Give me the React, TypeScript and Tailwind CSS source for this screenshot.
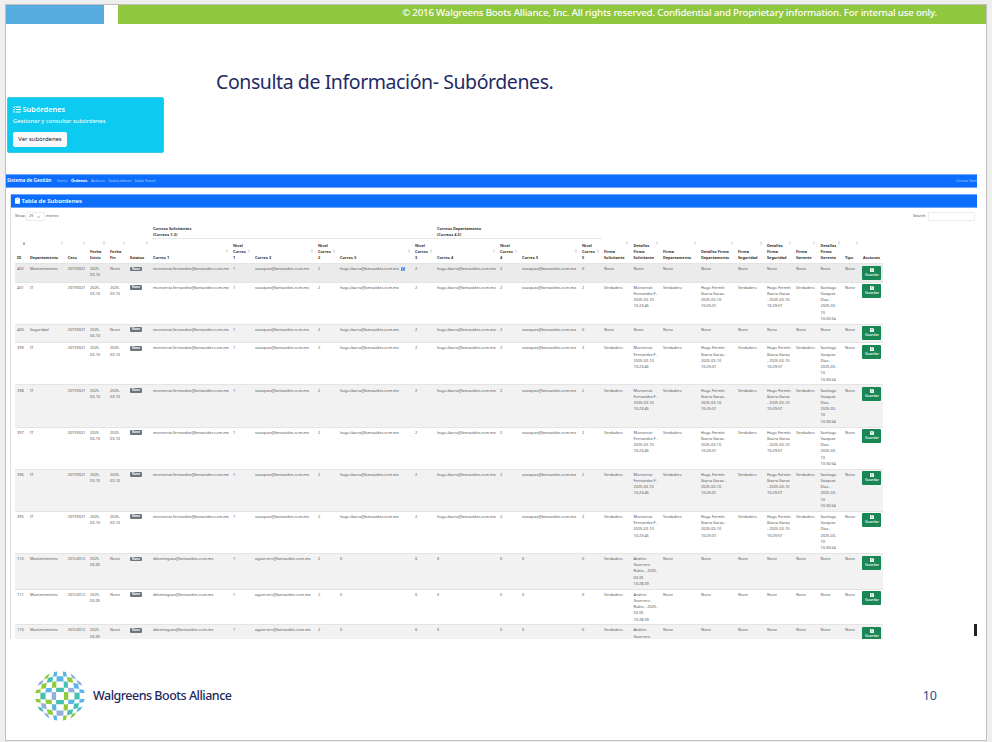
import React from "react";

const MAIL_M = "monserrat.fernandez@benavides.com.mx";
const MAIL_V = "svasquez@benavides.com.mx";
const MAIL_H = "hugo.ibarra@benavides.com.mx";
const MAIL_D = "ddominguez@benavides.com.mx";
const MAIL_A = "aguerrero@benavides.com.mx";

const GRID =
  "grid grid-cols-[13px_37.7px_22.3px_20px_20px_23px_80px_22px_63px_22px_75px_22px_63px_22px_60px_22px_29.5px_29.5px_38px_37px_29px_29px_24.5px_24.5px_18px_22px]";

const HEADERS = [
  "ID", "Departamento", "Ceco", "Fecha\nInicio", "Fecha\nFin", "Estatus",
  "Correo 1", "Nivel\nCorreo\n1", "Correo 2", "Nivel\nCorreo\n2", "Correo 3", "Nivel\nCorreo\n3",
  "Correo 4", "Nivel\nCorreo\n4", "Correo 5", "Nivel\nCorreo\n5",
  "Firma\nSolicitante", "Detalles\nFirma\nSolicitante", "Firma\nDepartamento", "Detalles Firma\nDepartamento",
  "Firma\nSeguridad", "Detalles\nFirma\nSeguridad", "Firma\nGerente", "Detalles\nFirma\nGerente", "Tipo", "Acciones",
];

type Row = { cells: string[]; height: string; edit?: boolean; bg: string };

const N = "None";
const V = "Verdadero";

function unsigned(id: string, dept: string, height: string, bg: string, edit = false): Row {
  return {
    cells: [id, dept, "201Y0021", "2025-\n03-10", N, N, MAIL_M, "1", MAIL_V, "2", MAIL_H, "2", MAIL_H, "2", MAIL_V, "0", N, N, N, N, N, N, N, N, N],
    height, edit, bg,
  };
}

function signed(id: string, bg: string, height = "h-[42.1px]"): Row {
  return {
    cells: [
      id, "IT", "201Y0021", "2025-\n03-10", "2025-\n03-10", N, MAIL_M, "1", MAIL_V, "2", MAIL_H, "2", MAIL_H, "2", MAIL_V, "2",
      V, "Monserrat\nFernandez F -\n2025-03-10\n10:23:45", V, "Hugo Fermín\nIbarra Garza -\n2025-03-10\n10:25:01",
      V, "Hugo Fermín\nIbarra Garza\n- 2025-03-10\n10:29:57", V, "Santiago\nVazquez\nDiaz -\n2025-03-\n10\n10:30:54", N,
    ],
    height, bg,
  };
}

function maintenance(id: string, bg: string): Row {
  return {
    cells: [
      id, "Mantenimiento", "201L0012", "2025-\n03-05", N, N, MAIL_D, "1", MAIL_A, "2", "0", "0", "0", "0", "0", "0",
      V, "Andres\nGuerrero\nRubio - 2025-\n03-05\n10:28:39", N, N, N, N, N, N, N,
    ],
    height: "h-[35.7px]", bg,
  };
}

const STRIPE = "bg-[#f2f2f2]";
const PLAIN = "bg-white";

const ROWS: Row[] = [
  unsigned("402", "Mantenimiento", "h-[18.7px]", "bg-[#ebebeb]", true),
  signed("401", PLAIN, "h-[42px]"),
  unsigned("400", "Seguridad", "h-[18.7px]", STRIPE),
  signed("399", PLAIN),
  signed("398", STRIPE),
  signed("397", PLAIN),
  signed("396", STRIPE),
  signed("395", PLAIN),
  maintenance("113", STRIPE),
  maintenance("111", PLAIN),
  maintenance("110", STRIPE),
];

function SortMark({ index }: { index: number }) {
  const nested = index >= 6 && index <= 15;
  return (
    <svg
      viewBox="0 0 4 8"
      className={`absolute right-[3px] h-[4px] w-[2px] ${nested ? "top-[10px]" : "top-[1.5px]"}`}
    >
      <path d="M2 0 4 3.5H0Z" fill={index === 0 ? "#dddddd" : "#cfcfcf"} />
      <path d="M2 8 4 4.5H0Z" fill={index === 0 ? "#333333" : "#cfcfcf"} />
    </svg>
  );
}

function ListIcon() {
  return (
    <svg viewBox="0 0 16 14" className="h-[7px] w-[8px]" fill="none" stroke="white" strokeWidth="2.4">
      <path d="M6 2H16M6 7H16M5 12H16" />
      <path d="M0 2 1.8 3.6 4.6 .4M0 7 1.8 8.6 4.6 5.4" strokeWidth="2" />
      <circle cx="1.6" cy="12" r="1.4" fill="white" stroke="none" />
    </svg>
  );
}

function ClipboardIcon() {
  return (
    <svg viewBox="0 0 12 16" className="h-[7px] w-[5px]">
      <path d="M1.5 2H3.5a2.5 2 0 0 1 5 0H10.5A1.5 1.5 0 0 1 12 3.5V14.5A1.5 1.5 0 0 1 10.5 16H1.5A1.5 1.5 0 0 1 0 14.5V3.5A1.5 1.5 0 0 1 1.5 2Z" fill="white" />
      <path d="M3.5 4.5H8.5" stroke="#0d6efd" strokeWidth="1" />
    </svg>
  );
}

function EditIcon() {
  return (
    <svg viewBox="0 0 16 16" className="h-[4.5px] w-[4.5px]" fill="none" stroke="#0d6efd" strokeWidth="2.8">
      <path d="M8 2.5H2V14H13.5V9" />
      <path d="M6 10 14.5 1.5" strokeWidth="4.4" />
    </svg>
  );
}

function SaveIcon() {
  return (
    <svg viewBox="0 0 14 14" className="h-[4px] w-[4px]">
      <path d="M1.5 0H10.5L14 3.5V12.5A1.5 1.5 0 0 1 12.5 14H1.5A1.5 1.5 0 0 1 0 12.5V1.5A1.5 1.5 0 0 1 1.5 0Z" fill="white" />
      <path d="M3 2.5H9V5H3Z" fill="#198754" />
      <circle cx="7" cy="9.5" r="1.8" fill="#198754" />
    </svg>
  );
}

function Cell({ row, index, text }: { row: Row; index: number; text: string }) {
  if (index === 5) {
    return (
      <div className="pl-[2px] pt-[0.6px]">
        <div className="h-[4.8px] w-[12px] rounded-[1.2px] bg-[#6c757d] text-center text-[3px] font-bold leading-[4.6px] text-white">
          {text}
        </div>
      </div>
    );
  }
  return (
    <div className="flex gap-[2px] whitespace-pre pl-[2px]">
      <span>{text}</span>
      {row.edit && index === 10 && <span className="pt-[0.8px]"><EditIcon /></span>}
    </div>
  );
}

const B = "#5ab4e5";
const G = "#90cb3e";
const T = "#45c1b0";
const L = "#94afdd";
const GLOBE: [number, string[]][] = [
  [-4, [G, B, B, L]],
  [-3, [L, T, B, G, L]],
  [-2, [G, G, T, B]],
  [-1, [G, B, T, L, B]],
  [0, [T, L, G, T]],
  [1, [G, G, T, B, B]],
  [2, [L, B, G, T]],
  [3, [T, G, L, T, B]],
  [4, [L, B, G, G]],
];
const EDGES = [-1, -0.8, -0.59, -0.34, -0.16, 0.16, 0.34, 0.59, 0.8, 1];

/* Maps the unit square onto the unit disc so the checkerboard bulges like a sphere. */
function bulge(u: number, v: number) {
  const x = u * Math.sqrt(1 - (v * v) / 2) * 24.7 + 25;
  const y = v * Math.sqrt(1 - (u * u) / 2) * 24.7 + 25;
  return `${x.toFixed(2)},${y.toFixed(2)}`;
}

function Globe() {
  return (
    <svg viewBox="0 0 50 50" className="h-[50px] w-[50px]">
      {GLOBE.flatMap(([row, colors]) =>
        colors.map((color, k) => {
          const col = (colors.length === 5 ? -4 : -3) + k * 2;
          const [l, r, t, b] = [EDGES[col + 4], EDGES[col + 5], EDGES[row + 4], EDGES[row + 5]];
          return (
            <polygon
              key={`${row}:${col}`}
              points={[bulge(l, t), bulge(r, t), bulge(r, b), bulge(l, b)].join(" ")}
              fill={color}
            />
          );
        })
      )}
    </svg>
  );
}

export default function App() {
  return (
    <div className="h-[742px] w-[992px] overflow-hidden bg-[#efefef] pl-[5px] pt-[4px] font-['Noto_Sans',sans-serif]">
      <div className="relative flex h-[737px] w-[982px] flex-col border border-[#bfbfbf] bg-white">
        <header className="flex h-[19px] shrink-0 gap-[14px]">
          <div className="w-[98px] bg-[#57ade0]" />
          <div className="flex-1 whitespace-nowrap bg-[#8fc73f] pr-[49px] text-right text-[9.7px] font-medium leading-[16px] tracking-[-0.185px] text-white">
            © 2016 Walgreens Boots Alliance, Inc. All rights reserved. Confidential and Proprietary information. For internal use only.
          </div>
        </header>

        <h1 className="h-[73px] shrink-0 whitespace-nowrap pl-[210px] pt-[44px] text-[19.5px] leading-[28px] tracking-[-0.42px] text-[#242b63]">
          Consulta de Información- Subórdenes.
        </h1>

        <section className="ml-[1px] h-[56px] w-[157px] shrink-0 rounded-[2px] border border-[#3cc9e8] bg-[#0dcaf0] pl-[5px] pt-[6px] text-white">
          <div className="flex h-[10px] items-center gap-[1.5px] text-[7.4px] font-semibold leading-[10px]">
            <ListIcon />
            <span>Subórdenes</span>
          </div>
          <p className="pt-[3px] text-[5.85px] leading-[9px]">Gestionar y consultar subórdenes</p>
          <button className="mt-[6px] block h-[15px] w-[54px] whitespace-nowrap rounded-[2px] bg-[#f8f9fa] text-[5.9px] leading-[15px] text-[#222222]">
            Ver subórdenes
          </button>
        </section>

        <nav className="mt-[21px] flex h-[13.5px] w-[971px] shrink-0 items-center overflow-hidden whitespace-nowrap border-y border-[#6ea8fe] bg-[#0d6efd] text-[4.1px] text-[#a9cbfe]">
          <span className="w-[51px] pl-[1px] text-[4.75px] font-semibold text-white">Sistema de Gestión</span>
          <span className="w-[14px]">Inicio</span>
          <span className="w-[20px] text-[3.9px] font-bold text-white">Órdenes</span>
          <span className="w-[17.5px]">Activos</span>
          <span className="w-[26px]">Subórdenes</span>
          <span>Subir Excel</span>
          <span className="ml-auto w-[21px] overflow-hidden">Cerrar Sesión</span>
        </nav>

        <main className="ml-[4px] mt-[6px] h-[445px] w-[967px] shrink-0 overflow-hidden border-l border-[#dddddd] text-[3.87px] leading-[6.22px] text-[#555555]">
          <div className="flex h-[14.5px] items-center gap-[1.5px] border-y border-[#6ea8fe] bg-[#0d6efd] pl-[4px] text-[6px] font-semibold text-white">
            <ClipboardIcon />
            <span>Tabla de Subordenes</span>
          </div>

          <div className="flex h-[17px] items-center pl-[4px] pr-[2px]">
            <span className="w-[11px]">Show</span>
            <span className="flex h-[9px] w-[18.5px] items-center justify-between rounded-[1px] border border-[#ececec] pl-[2px] pr-[4px]">
              25
              <svg viewBox="0 0 8 5" className="h-[2px] w-[3px]" fill="none" stroke="#444444" strokeWidth="1.5"><path d="M1 1 4 4 7 1" /></svg>
            </span>
            <span className="pl-[1.5px]">entries</span>
            <span className="ml-auto w-[15px]">Search:</span>
            <span className="h-[9px] w-[47px] rounded-[1px] border border-[#ececec]" />
          </div>

          <div className="ml-[4px] w-[868px]">
            <div className="grid h-[14px] grid-cols-[136px_284px_167px] whitespace-pre font-bold text-[#333333]">
              <div />
              <div className="border-b border-[#e9e9e9] pl-[2px] pt-[0.6px]">{"Correos Solicitantes\n(Correos 1-3)"}</div>
              <div className="border-b border-[#e9e9e9] pl-[2px] pt-[0.6px]">{"Correos Departamento\n(Correos 4-5)"}</div>
            </div>

            <div className={`${GRID} h-[24px] font-bold text-[#333333]`}>
              {HEADERS.map((label, i) => (
                <div key={i} className="relative flex items-end whitespace-pre pb-[1.6px] pl-[2px]">
                  {label}
                  {i < 25 && <SortMark index={i} />}
                </div>
              ))}
            </div>

            {ROWS.map((row) => (
              <div key={row.cells[0]} className={`${GRID} ${row.height} ${row.bg} border-t border-[#e4e4e4] pt-[2.1px]`}>
                {row.cells.map((text, i) => (
                  <Cell key={i} row={row} index={i} text={text} />
                ))}
                <div className="-mt-[0.4px] pl-[1.5px]">
                  <div className="flex h-[14px] w-[19px] flex-col items-center justify-center rounded-[1px] bg-[#198754] text-[3.5px] font-medium leading-[6px] text-white">
                    <SaveIcon />
                    <span>Guardar</span>
                  </div>
                </div>
              </div>
            ))}
          </div>
        </main>

        <footer className="flex flex-1 items-center pl-[29px] pr-[49px] pt-[14px]">
          <Globe />
          <span className="pl-[8px] text-[12.5px] font-medium tracking-[-0.5px] text-[#1f2a60]">Walgreens Boots Alliance</span>
          <span className="ml-auto text-[12.5px] text-[#1f4e86]">10</span>
        </footer>

        <span className="absolute left-[968px] top-[619px] h-[12px] w-[3px] bg-[#222222]" />
      </div>
    </div>
  );
}
